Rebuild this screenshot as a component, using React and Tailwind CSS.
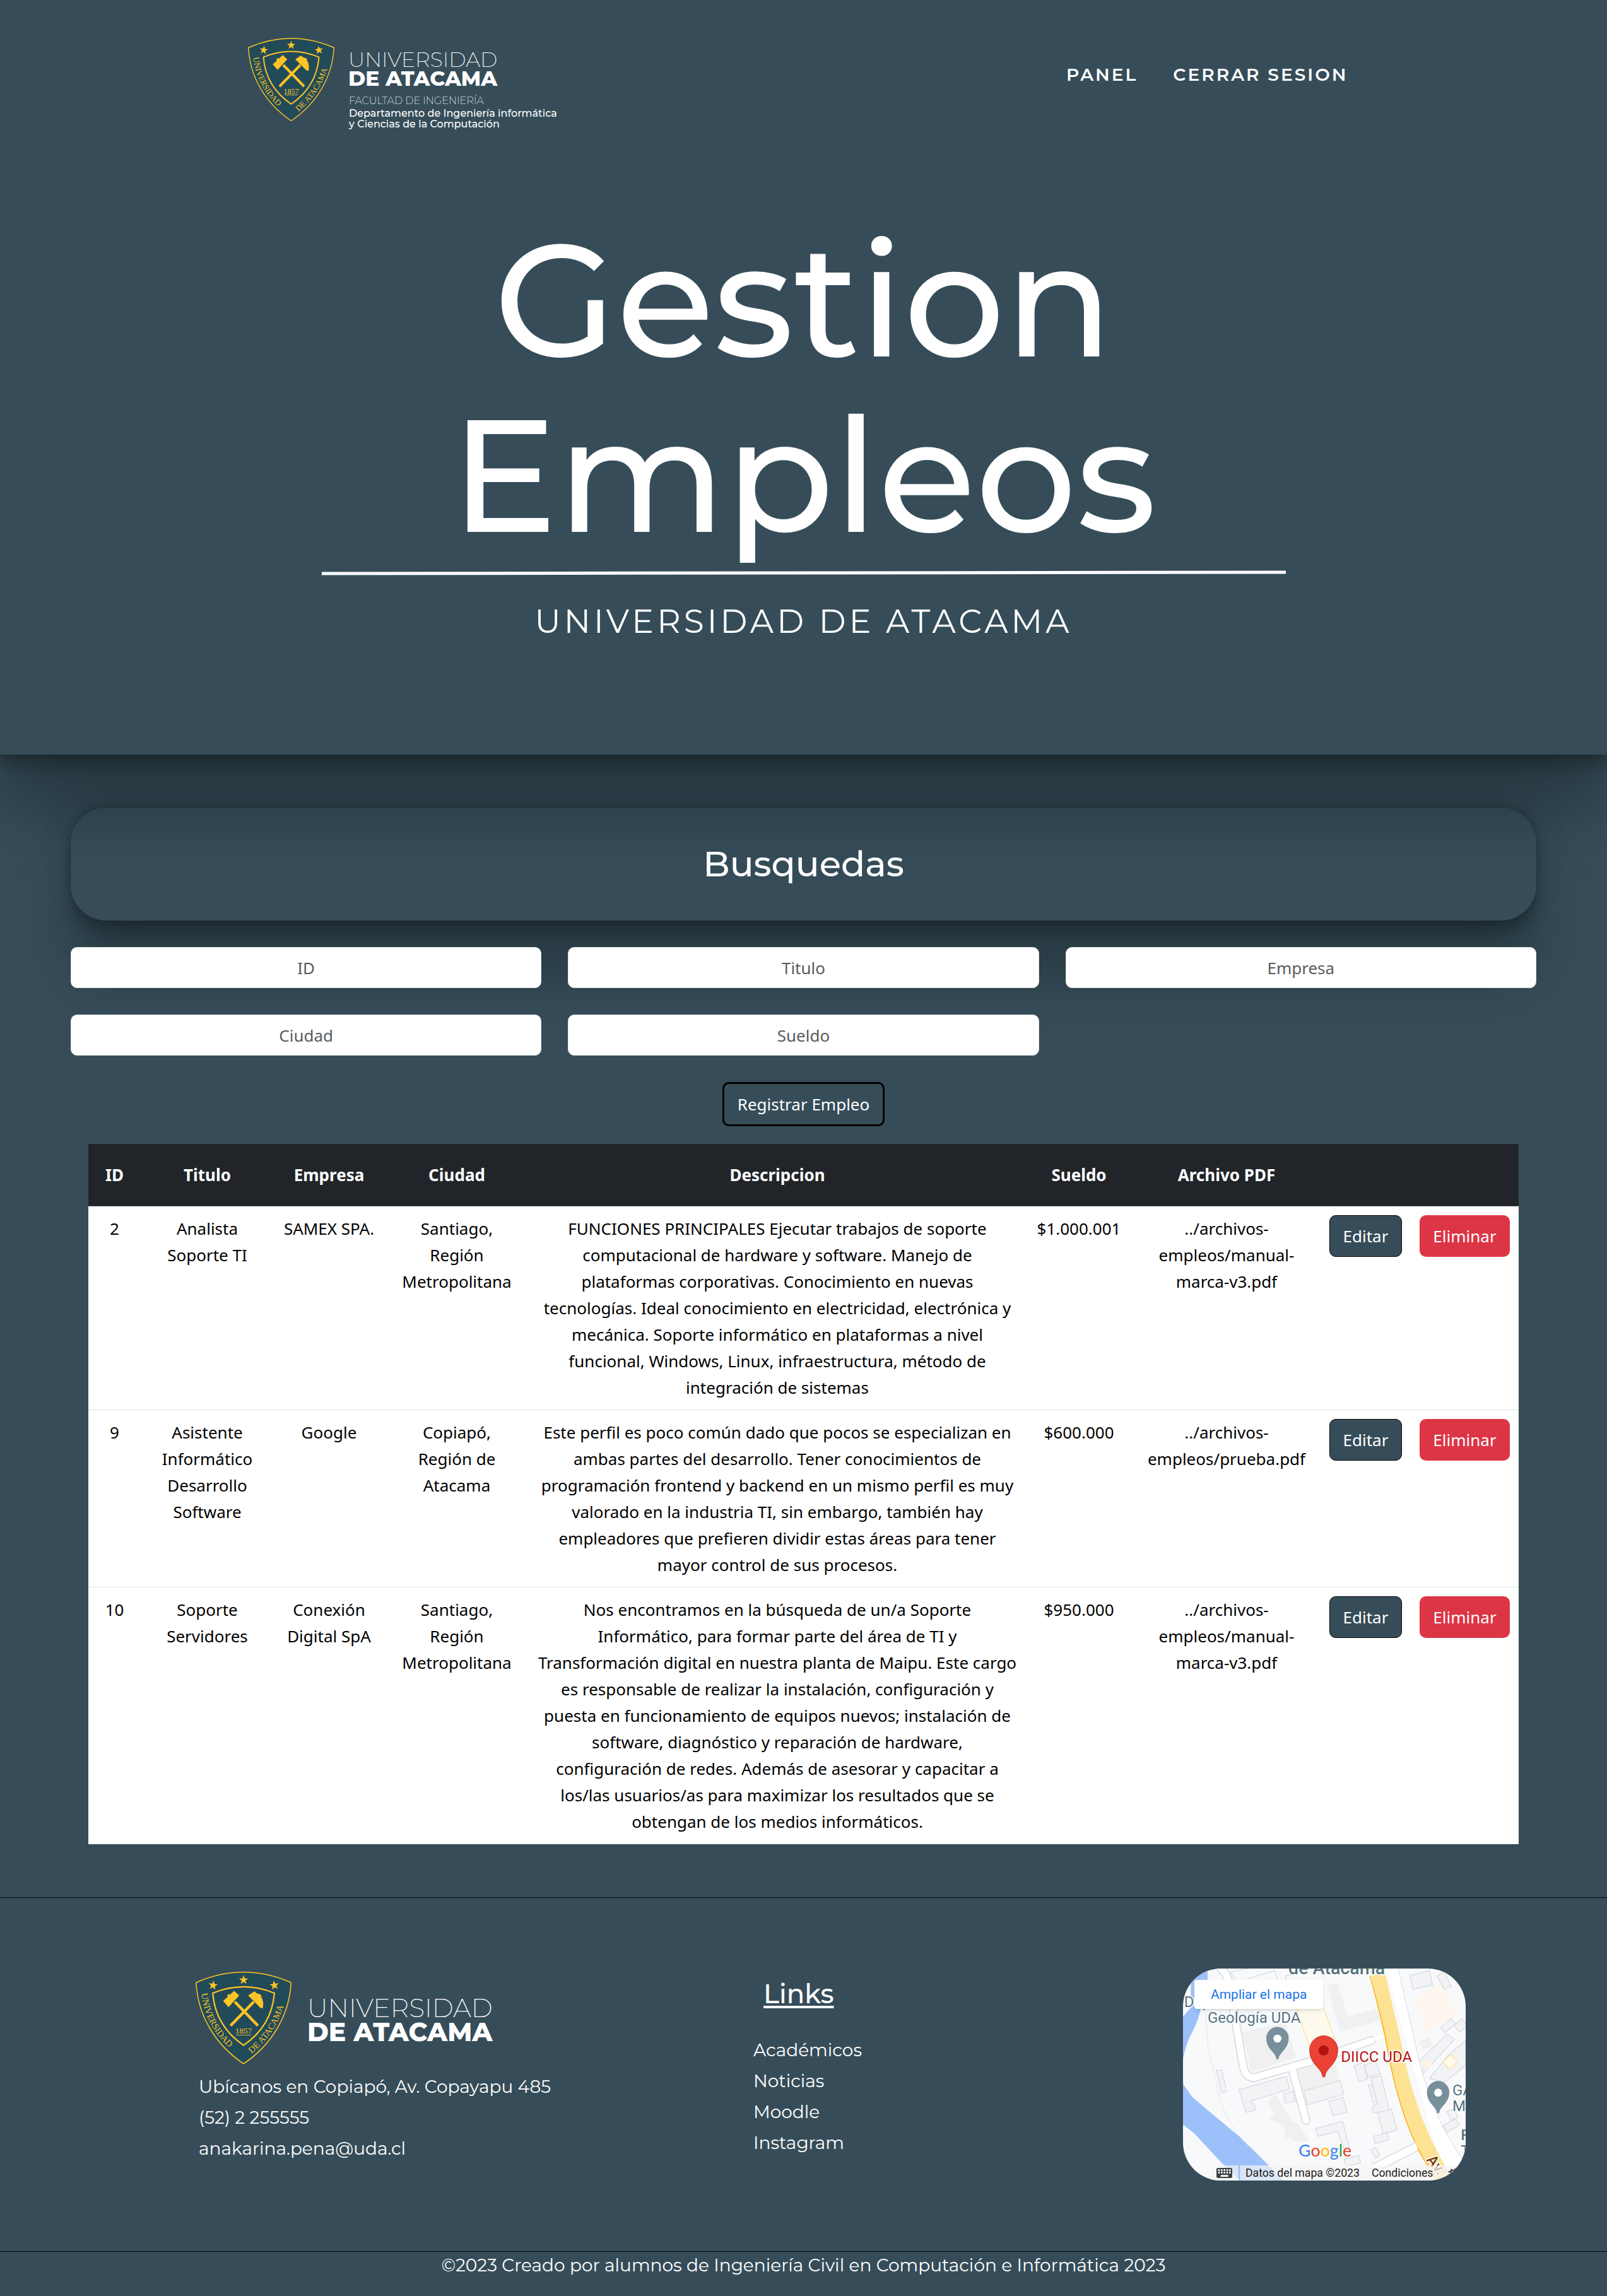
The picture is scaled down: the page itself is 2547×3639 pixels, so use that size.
const display = "font-['Montserrat','Inter',sans-serif]";
const body = "font-['Noto_Sans','Open_Sans',sans-serif]";
const surfaceShadow =
  "shadow-[0_94px_96px_rgba(0,0,0,0.25),0_-21px_52px_rgba(0,0,0,0.12),0_7px_10px_rgba(0,0,0,0.12),0_21px_23px_rgba(0,0,0,0.17),0_-5px_9px_rgba(0,0,0,0.09)]";

const STAR = "M0-7 1.7-2.2 6.6-2.2 2.7.9 4.1 5.7 0 2.8-4.1 5.7-2.7.9-6.6-2.2-1.7-2.2Z";

function Shield({ id }) {
  return (
    <g fill="#fec325">
      <path d="M.8 15.5Q68.5-14 136.2 15.5C134 62 109 104 68.5 131.5C28 104 3 62 .8 15.5Z" fill="#224b59" stroke="#fec325" strokeWidth="1.4" />
      <path d="M24.5 30.7Q68.5 12.5 112.5 30.7C110 62 95 87 68.5 105C42 87 27 62 24.5 30.7Z" fill="none" stroke="#fec325" strokeWidth="2" />
      <path d={STAR} transform="translate(68.5 11.8)" />
      <path d={STAR} transform="translate(25 19.5) rotate(8)" />
      <path d={STAR} transform="translate(112.5 19.5) rotate(-8)" />
      <path d="M39.3 42 55 27.3 62.3 34 47 50.7ZM46 35.500 44.800 34.300 47 32 49 32.500ZM75 34 84 28 93.700 35.700 Q98 43 96 52L93 52ZM88 31 91.500 32 94 34 93 36Z" />
      <path d="M56 43 89 77M83 43 50 77" stroke="#fec325" strokeWidth="4" fill="none" />
      <text x="68.5" y="88.500" textAnchor="middle" fontSize="12" fontFamily="Liberation Serif, serif">1857</text>
      <path d="M58 90.500H79" stroke="#fec325" strokeWidth=".8" />
      <path id={id + "l"} d="M8.500 31C12 68 32 96 58 118" fill="none" />
      <path id={id + "r"} d="M80 117C105 96 124 68 129 32" fill="none" />
      <text fontSize="13" fontFamily="Liberation Serif, serif">
        <textPath href={"#" + id + "l"}>UNIVERSIDAD</textPath>
      </text>
      <text fontSize="13" fontFamily="Liberation Serif, serif">
        <textPath href={"#" + id + "r"}>DE ATACAMA</textPath>
      </text>
    </g>
  );
}

function HeaderLogo() {
  return (
    <svg viewBox="0 0 520 150" className="h-[150px] w-[520px]" role="img" aria-label="Universidad de Atacama">
      <Shield id="top" />
      <g fill="#fff" fontFamily="Montserrat, Inter, sans-serif">
        <text x="159" y="46" fontSize="33" fontWeight="200">UNIVERSIDAD</text>
        <text x="159" y="76" fontSize="33" fontWeight="800">DE ATACAMA</text>
        <text x="160" y="105" fontSize="16" fontWeight="200">FACULTAD DE INGENIERÍA</text>
        <text x="160" y="125" fontSize="16" fontWeight="500">Departamento de Ingeniería informática</text>
        <text x="160" y="142" fontSize="16" fontWeight="500">y Ciencias de la Computación</text>
      </g>
    </svg>
  );
}

function FooterLogo() {
  return (
    <svg viewBox="0 0 480 148" className="h-[148px] w-[480px]" role="img" aria-label="Universidad de Atacama">
      <g transform="scale(1.11)">
        <Shield id="bottom" />
      </g>
      <g fill="#fff" fontFamily="Montserrat, Inter, sans-serif">
        <text x="177" y="72" fontSize="41" fontWeight="200">UNIVERSIDAD</text>
        <text x="177" y="110" fontSize="41" fontWeight="800">DE ATACAMA</text>
      </g>
    </svg>
  );
}

function Pin({ x, y, s, fill, stroke, dot }) {
  return (
    <g transform={`translate(${x} ${y}) scale(${s})`}>
      <path d="M0 96C-5 96-5 92-6 86C-12 62-52 46-52-4A52 52 0 0 1 52-4C52 46 12 62 6 86C5 92 5 96 0 96Z" fill={fill} stroke={stroke} strokeWidth="2" />
      <circle cy="-2" r="19" fill={dot} />
    </g>
  );
}

function MapDrawing() {
  return (
    <svg viewBox="45 60 1344 1008" className="block h-full w-full" fontFamily="Roboto, sans-serif" role="img" aria-label="Mapa DIICC UDA">
      <rect x="45" y="60" width="1344" height="1008" fill="#f8f9fb" />
      <path d="M45 60H162V250H130Q118 310 80 380Q58 425 45 488V290L82 245V120L45 150Z" fill="#9cc0f9" />
      <path d="M45 608 90 672 200 765 315 860 410 955 525 1068H315L225 980 100 845 45 802Z" fill="#9cc0f9" />
      <path d="M150 250Q160 340 165 440L200 590Q220 700 262 780Q300 850 350 895L540 1068" fill="none" stroke="#e3e5e8" strokeWidth="3" />
      <path d="M45 148H1389" stroke="#eceef0" strokeWidth="2" />
      <path d="M575 240H712L768 400 785 440 655 455Z" fill="#fefbee" />
      <path d="M580 240 650 440M710 240 768 400" stroke="#fde293" strokeWidth="4" fill="none" />
      <g fill="#f0f0f0">
        <path d="M325 362 535 318 583 484 370 552Z" />
        <path d="M583 540 765 496 790 590 610 642Z" />
        <path d="M730 142 780 128 828 288 968 250 985 305 792 360Z" />
        <path d="M445 695 485 660 515 705 565 790Q590 790 605 815L645 878Q590 895 550 860L528 885 530 820Q500 780 450 785L480 750Z" />
        <path d="M1166 408 1214 388 1232 428 1186 448Z" />
      </g>
      <g fill="#f1f3f5" stroke="#d9dbe0" strokeWidth="4">
        <path d="M312 636 536 572 552 634 366 690 368 702 382 702 390 732 344 744Z" />
        <path d="M524 656 570 642 578 692 530 700Z" />
        <path d="M620 642 792 592 810 658 636 708Z" />
        <path d="M738 692 806 672 824 742 760 760Z" />
        <path d="M674 822 804 786 836 910 808 916 780 834 686 858Z" />
        <path d="M204 546 230 542 252 644 228 650Z" />
        <path d="M858 522 904 506 922 586 882 598Z" />
        <path d="M908 520 962 502 984 560 924 578Z" />
        <path d="M940 582 988 570 1026 734 950 748 944 716 968 704Z" />
        <path d="M926 614 944 610 968 694 950 698Z" />
        <path d="M970 746 1036 728 1064 828 996 846Z" />
        <path d="M950 858 1014 840 1024 874 958 892Z" />
        <path d="M938 922 960 910 980 948 960 962Z" />
        <path d="M812 966 880 948 890 984 820 1000Z" />
        <path d="M1124 94 1216 70 1232 138 1138 158Z" />
        <path d="M1254 96 1284 74 1320 142 1288 160Z" />
        <path d="M1270 342 1318 298 1342 322 1290 364Z" />
        <path d="M1334 330 1370 300 1396 330 1360 364Z" />
        <path d="M1160 508 1300 372 1336 396 1190 556Z" />
        <path d="M1216 584 1300 480 1389 400V520L1290 600Z" />
        <path d="M1300 740 1334 724 1352 770 1320 782Z" />
        <path d="M1282 806 1340 776 1360 804 1300 838Z" />
      </g>
      <path d="M1146 208 1268 136 1348 274 1198 360 1178 322 1198 312Z" fill="#fef7f0" stroke="#fce8c8" strokeWidth="2" strokeDasharray="4 3" />
      <path d="M1280 504 1318 468 1350 502 1314 540Z" fill="#fefbea" stroke="#fde293" strokeWidth="4" />
      <path d="M1184 510 1210 490 1232 516 1204 540Z" fill="#fef4e6" />
      <g fill="none" stroke="#d9dbe0">
        <path d="M225 60Q262 90 270 160L330 520Q345 595 400 574L690 490L940 402M562 530 630 782" strokeWidth="42" strokeLinecap="round" strokeLinejoin="round" />
        <path d="M270 76 350 60M270 76 300 120M350 110 480 70 495 110M532 96 610 70M540 120 530 96" strokeWidth="4" />
      </g>
      <path d="M225 60Q262 90 270 160L330 520Q345 595 400 574L690 490L940 402M562 530 630 782" fill="none" stroke="#fff" strokeWidth="32" strokeLinecap="round" strokeLinejoin="round" />
      <path d="M950 396 1010 382" stroke="#fff" strokeWidth="12" />
      <path d="M950 1010 1170 900" stroke="#d9dbe0" strokeWidth="44" />
      <path d="M930 1020 1170 900" stroke="#fff" strokeWidth="36" />
      <path d="M1010 60H1068L1150 420Q1185 590 1260 770Q1310 880 1389 990V1068H1290Z" fill="#fff" />
      <path d="M1068 60 1150 420Q1185 590 1260 770Q1310 880 1389 990" fill="none" stroke="#d9dbe0" strokeWidth="3" />
      <path d="M932 60H1000L1080 400Q1110 570 1170 740Q1220 880 1330 1068H1250Q1160 930 1140 870Q1080 720 1040 560Z" fill="#fde293" />
      <path d="M934 94Q990 300 1010 400Q1040 580 1080 705Q1108 800 1148 886M1160 914Q1190 970 1212 1000" fill="none" stroke="#f9ab00" strokeWidth="4" />
      <g stroke="#fff" strokeWidth="10" paintOrder="stroke" strokeLinejoin="round" fill="#56737f">
        <text x="546" y="88" fontSize="86" fontWeight="500">de Atacama</text>
        <text x="50" y="242" fontSize="72">Dep</text>
        <text x="162" y="317" fontSize="72">Geología UDA</text>
        <text x="1326" y="662" fontSize="72">GA</text>
        <text x="1326" y="737" fontSize="72">M</text>
        <text x="1366" y="875" fontSize="72" fontWeight="500">F</text>
        <text x="1366" y="950" fontSize="72" fontWeight="500">T</text>
        <text x="796" y="503" fontSize="72" fill="#b31412">DIICC UDA</text>
        <text x="1200" y="970" fontSize="72" fontWeight="500" fill="#7a3e06" transform="rotate(52 1200 970)">Av.</text>
      </g>
      <Pin x={494} y={395} s={1} fill="#78909c" stroke="#607d8b" dot="#fff" />
      <Pin x={1258} y={652} s={1} fill="#78909c" stroke="#607d8b" dot="#fff" />
      <Pin x={714} y={452} s={1.29} fill="#ea4335" stroke="#c5221f" dot="#b31412" />
      <g transform="translate(0 954)" fontFamily="Lato, sans-serif" fontSize="80" fontWeight="500" stroke="#fff" strokeWidth="6" paintOrder="stroke">
        <text x="594">
          <tspan fill="#4285f4">G</tspan>
          <tspan fill="#ea4335">o</tspan>
          <tspan fill="#fbbc04">o</tspan>
          <tspan fill="#4285f4">g</tspan>
          <tspan fill="#34a853">l</tspan>
          <tspan fill="#ea4335">e</tspan>
        </text>
      </g>
      <path d="M178 996H308V1068H178ZM316 996H912V1068H316ZM916 996H1389V1068H916Z" fill="#f5f5f5" fillOpacity=".7" />
      <rect x="204" y="1008" width="75" height="48" rx="7" fill="#3c4043" />
      <path d="M212 1018H272M212 1030H272" stroke="#fff" strokeWidth="8" strokeDasharray="8 5" />
      <path d="M224 1046H260" stroke="#fff" strokeWidth="8" />
      <g fontSize="53" fill="#1a1a1a">
        <text x="342" y="1050">Datos del mapa ©2023</text>
        <text x="942" y="1050">Condiciones</text>
      </g>
      <g fill="none" stroke="#111" strokeWidth="5">
        <path d="M1340 1050H1318V1024Q1326 1014 1340 1020M1306 1026H1318M1306 1044H1318M1318 1014 1326 1022M1338 1010V1018" />
      </g>
    </svg>
  );
}

const COLUMNS = [
  ["ID", "w-[83px]"],
  ["Titulo", "w-[211px]"],
  ["Empresa", "w-[175px]"],
  ["Ciudad", "w-[230px]"],
  ["Descripcion", ""],
  ["Sueldo", "w-[170px]"],
  ["Archivo PDF", "w-[298px]"],
  ["", "w-[143px]"],
  ["", "w-[171px]"],
];

const JOBS = [
  {
    id: "2",
    title: "Analista\nSoporte TI",
    company: "SAMEX SPA.",
    city: "Santiago,\nRegión\nMetropolitana",
    text: "FUNCIONES PRINCIPALES Ejecutar trabajos de soporte\ncomputacional de hardware y software. Manejo de\nplataformas corporativas. Conocimiento en nuevas\ntecnologías. Ideal conocimiento en electricidad, electrónica y\nmecánica. Soporte informático en plataformas a nivel\nfuncional, Windows, Linux, infraestructura, método de\nintegración de sistemas",
    salary: "$1.000.001",
    file: "../archivos-\nempleos/manual-\nmarca-v3.pdf",
  },
  {
    id: "9",
    title: "Asistente\nInformático\nDesarrollo\nSoftware",
    company: "Google",
    city: "Copiapó,\nRegión de\nAtacama",
    text: "Este perfil es poco común dado que pocos se especializan en\nambas partes del desarrollo. Tener conocimientos de\nprogramación frontend y backend en un mismo perfil es muy\nvalorado en la industria TI, sin embargo, también hay\nempleadores que prefieren dividir estas áreas para tener\nmayor control de sus procesos.",
    salary: "$600.000",
    file: "../archivos-\nempleos/prueba.pdf",
  },
  {
    id: "10",
    title: "Soporte\nServidores",
    company: "Conexión\nDigital SpA",
    city: "Santiago,\nRegión\nMetropolitana",
    text: "Nos encontramos en la búsqueda de un/a Soporte\nInformático, para formar parte del área de TI y\nTransformación digital en nuestra planta de Maipu. Este cargo\nes responsable de realizar la instalación, configuración y\npuesta en funcionamiento de equipos nuevos; instalación de\nsoftware, diagnóstico y reparación de hardware,\nconfiguración de redes. Además de asesorar y capacitar a\nlos/las usuarios/as para maximizar los resultados que se\nobtengan de los medios informáticos.",
    salary: "$950.000",
    file: "../archivos-\nempleos/manual-\nmarca-v3.pdf",
  },
];

function JobsTable() {
  return (
    <table className={`${body} w-full table-fixed border-separate border-spacing-0 bg-white text-center text-[26px] leading-[42px] text-black`}>
      <thead className="bg-[#212529] text-white">
        <tr>
          {COLUMNS.map(([name, width], i) => (
            <th key={i} scope="col" className={`${width} border-b border-[#4d5154] py-7 font-bold whitespace-nowrap`}>
              {name}
            </th>
          ))}
        </tr>
      </thead>
      <tbody>
        {JOBS.map((job) => (
          <tr key={job.id} className="align-top whitespace-pre">
            {[job.id, job.title, job.company, job.city, job.text, job.salary, job.file].map((value, i) => (
              <td key={i} className="border-b border-[#dee2e6] py-[14px]">
                {value}
              </td>
            ))}
            <td className="border-b border-[#dee2e6] p-[14px]">
              <button type="button" className="h-[66px] w-full rounded-[10px] border border-black bg-[#364d59] text-white">
                Editar
              </button>
            </td>
            <td className="border-b border-[#dee2e6] p-[14px]">
              <button type="button" className="h-[66px] w-full rounded-[10px] bg-[#dc3545] text-white">
                Eliminar
              </button>
            </td>
          </tr>
        ))}
      </tbody>
    </table>
  );
}

export default function App() {
  return (
    <div className={`${display} min-h-screen bg-[#364d59] text-white`}>
      <header className={`${surfaceShadow} pb-[179px]`}>
        <nav className="mx-auto flex max-w-[1762px] items-start justify-between pt-[60px]">
          <a href="#inicio">
            <HeaderLogo />
          </a>
          <div className="flex gap-14 pt-[37px] pr-[18px] text-[28px] leading-[42px] font-semibold tracking-[3px]">
            <a href="#panel">PANEL</a>
            <a href="#salir">CERRAR SESION</a>
          </div>
        </nav>
        <div className="mx-auto max-w-[1528px] pt-[126px] text-center">
          <h1 className="text-[252px] leading-[278px] font-medium">
            Gestion
            <br />
            Empleos
          </h1>
          <svg viewBox="0 0 1528 8" className="mt-3 block h-2 w-full" aria-hidden="true">
            <path d="M0 5 1528 3" stroke="#fff" strokeWidth="5" />
          </svg>
          <p className="mt-[41px] text-[52px] leading-[64px] font-normal tracking-[5px]">UNIVERSIDAD DE ATACAMA</p>
        </div>
      </header>

      <main className="px-28 pt-[84px]">
        <section className={`${surfaceShadow} rounded-[56px] py-[55px] text-center`}>
          <h2 className="text-[56px] leading-[69px] font-medium">Busquedas</h2>
        </section>

        <form className={`${body} mt-[42px] grid grid-cols-3 gap-[42px]`}>
          {["ID", "Titulo", "Empresa", "Ciudad", "Sueldo"].map((name) => (
            <input
              key={name}
              type="text"
              aria-label={name}
              placeholder={name}
              className="h-[65px] min-w-0 rounded-[10px] border border-[#dee2e6] bg-white text-center text-[26px] text-[#212529] placeholder:text-[#595c5f]"
            />
          ))}
        </form>

        <div className="mt-[42px] flex justify-center">
          <button type="button" className={`${body} h-[70px] rounded-[10px] border-3 border-black px-[21px] text-[26px]`}>
            Registrar Empleo
          </button>
        </div>

        <div className="mt-7 px-7">
          <JobsTable />
        </div>
      </main>

      <footer className="mt-[84px] border-t border-black text-[28px] leading-[49px]">
        <div className="grid grid-cols-[884px_681px_1fr] pt-28 pb-28 pl-[310px]">
          <div className="pt-[5px]">
            <FooterLogo />
            <address className="mt-[10px] pl-[5px] whitespace-nowrap not-italic">
              Ubícanos en Copiapó, Av. Copayapu 485
              <br />
              (52) 2 255555
              <br />
              anakarina.pena@uda.cl
            </address>
          </div>
          <div className="pt-[10px]">
            <h3 className="pl-4 text-[42px] leading-[60px] font-medium underline underline-offset-4">Links</h3>
            <ul className="mt-[35px]">
              {["Académicos", "Noticias", "Moodle", "Instagram"].map((name) => (
                <li key={name}>
                  <a href={"#" + name}>{name}</a>
                </li>
              ))}
            </ul>
          </div>
          <div className="relative h-[336px] w-[448px] overflow-hidden rounded-[60px]">
            <MapDrawing />
            <a
              href="#mapa"
              className="absolute top-[18px] left-[18px] rounded-sm bg-white px-[26px] font-['Roboto',sans-serif] text-[21px] leading-[46px] text-[#1a73e8] shadow-md"
            >
              Ampliar el mapa
            </a>
          </div>
        </div>
        <p className="border-t border-black pb-7 text-center leading-[42px]">
          ©2023 Creado por alumnos de Ingeniería Civil en Computación e Informática 2023
        </p>
      </footer>
    </div>
  );
}
